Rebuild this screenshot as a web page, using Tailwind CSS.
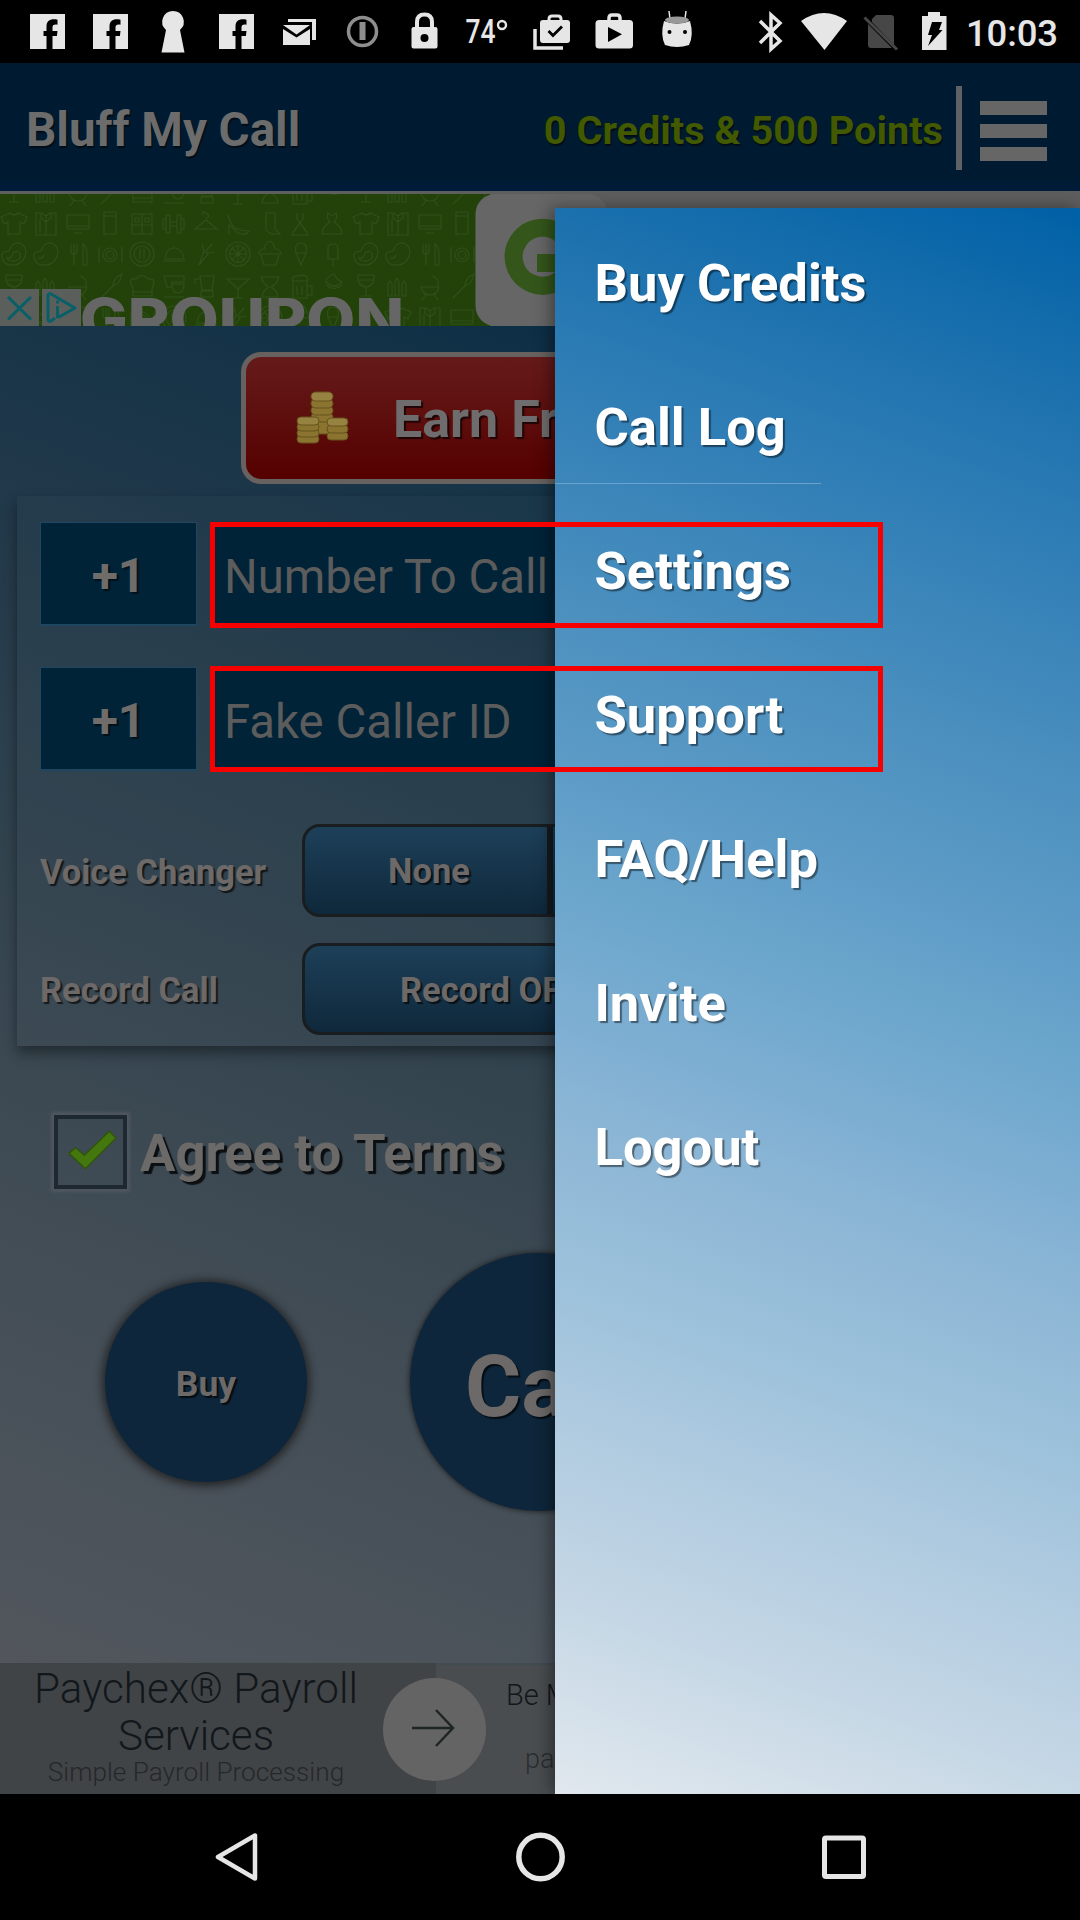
<!DOCTYPE html>
<html lang="en">
<head>
<meta charset="utf-8">
<title>Bluff My Call</title>
<script src="https://cdn.jsdelivr.net/npm/@tailwindcss/browser@4"></script>
</head>
<body class="bg-black">
<svg class="hidden">
  <defs>
    <g id="r1">
      <path d="M-4 -10l-9 4 3 7 4-2v12h12v-12l4 2 3-7-9-4q-4 4-8 0z"/>
      <path d="M22-10h6l4 3 4-3h6v22h-20zM32-7v19M27-10v5l5 4 5-4v-5M26-4v14"/>
      <path d="M53-8h22v14h-22zM60 10h8M53 3h22"/>
      <path d="M90-11h12v22h-12zM90-7h12"/>
      <path d="M118-9h20v20h-20zM128-9v20M118 2h20M121-5h4v4h-4zM131-5h4v4h-4z"/>
      <path d="M149-4h3v10h-3zM152-8h4v18h-4zM156-1h7v4h-7zM163-8h4v18h-4zM167-4h3v10h-3z"/>
      <path d="M192-3q0-2 2-3t-2-4-3 2M192-3l11 9h-22z"/>
      <path d="M214-8q3 12 9 14t12 2q-2 5-11 2l-9-8v9"/>
      <path d="M252-10h9v16l5 5h-9l-5-4z"/>
      <path d="M283-10v6l3 4 3-4v-6M286 0q-5 6-8 12h16q-3-6-8-12z"/>
      <path d="M314-10q-2 6 2 9-8 5-8 12h20q0-7-8-12 4-3 2-9-4 5-8 0z"/>
    </g>
    <g id="r2">
      <path d="M-11 6q-4-9 6-9 3-9 10-8 9 3 6 13t-14 9q-6 0-8-5zM-7 4q5 1 6-5 5-4 7 1t-5 7q-6 1-8-3z"/>
      <path d="M21 6q-4-9 6-9 3-9 10-8 9 3 6 13t-14 9q-6 0-8-5zM24 4q5 1 6-3"/>
      <path d="M57-10v7q0 3 3 3t3-3v-7M60-10v21M69-10q4 2 4 10v11h-4z"/>
      <circle cx="96" cy="1" r="7"/><circle cx="96" cy="1" r="4"/><path d="M85-7v16M108-7v16"/>
      <circle cx="128" cy="0" r="12"/><circle cx="128" cy="0" r="8"/><path d="M126-5v10M130-5v10"/>
      <path d="M149 7h22M151 5q1-11 9-11t10 11zM160-8v2"/>
      <path d="M185 11l5-14 4 3zM190-3l-2-7M192-3l6-7M193-1l7-1"/>
      <circle cx="224" cy="0" r="12"/><circle cx="224" cy="0" r="8.500"/><path d="M224-8v16M216 0h16M218-6l12 12M230-6L218 6"/>
      <path d="M245 0q0-5 5-5 2-7 6-8 4 2 5 8 6 0 6 5zM247 1l3 10h12l3-10"/>
      <path d="M282-1h10l-5 12zM282-1q-2-10 5-10t5 10"/>
      <path d="M314 5v-11q0-4 5-4t5 4v11zM319 5v7"/>
    </g>
    <g id="r3">
      <path d="M-8-11h16q1 11-8 12-9-1-8-12zM0 1v9M-5 10h10M-7-6h14"/>
      <path d="M22 10v-12l2-3 2 3v12zM29 10v-14l2-4 2 4v14zM36 10v-12l2-3 2 3v12z"/>
      <path d="M55 1h18q-2 8-9 8t-9-8zM60 8l-4 6M68 8l4 6M66-10q8 2 6 10"/>
      <path d="M87 12l12-12M99 0q0-8 9-12-2 10-9 12z"/>
      <path d="M119 2q-6-10 3-9 6-7 12 0 9-1 4 9v8h-19zM119 6h19"/>
      <path d="M150-10h20v6h-12v5h-5zM158-2h12q0 9-6 9t-6-9zM150 11h20"/>
      <path d="M186-10h14l-2 14h-10zM187 5h12v6h-12zM186-7h-5v5"/>
      <path d="M213-7h22l-11 10zM224 3v9M219 12h10"/>
      <path d="M247-9h18q-2 7-8 10 6 3 7 10h-16q1-7 7-10-6-3-8-10z"/>
      <path d="M279-5h14v17h-14zM293 0h5v9h-5M278-5q0-6 7-5 8-3 9 5M283 0v9M288 0v9"/>
      <path d="M312-4q0-5 8-8 2 5 8 8-8 8-16 0zM312-1q8 7 16 0"/>
    </g>
  </defs>
</svg>

<div class="relative flex h-[1920px] w-[1080px] flex-col overflow-hidden bg-black font-['Roboto',sans-serif]">

  <!-- Status bar -->
  <div class="h-[63px] shrink-0">
    <svg width="1080" height="63" viewBox="0 0 1080 63" fill="#e6e6e6">
      <g id="fbicon">
        <path d="M30 14h35v35H30z"/>
        <path d="M46.500 49V36h-3v-5h3v-4.500c0-6 4-8 11-6.800v5c-4-.4-5 .4-5 3V31h5l-.6 5h-4.400v13z" fill="#000"/>
      </g>
      <use href="#fbicon" x="63"/>
      <use href="#fbicon" x="189"/>
      <path d="M173 11a10.800 10.800 0 0 1 7 19l4.500 22.500h-23L166 30a10.800 10.800 0 0 1 7-19z"/>
      <path d="M288 22v-3h28v21h-4V22z"/>
      <path d="M283 25h27l-13.500 9.500zM283 29l13.500 8.500L310 29v16h-27z"/>
      <circle cx="362.500" cy="31.500" r="14" fill="none" stroke="#8e8e8e" stroke-width="3.500"/><path d="M359.500 22h6v18h-6z" fill="#8e8e8e"/>
      <path d="M417 28v-6q0-7.500 7.500-7.500T432 22v6" fill="none" stroke="#e6e6e6" stroke-width="4"/>
      <rect x="411.500" y="27" width="26" height="21.500" rx="2"/><circle cx="424.500" cy="38" r="4" fill="#000"/>
      <text x="465.500" y="43" font-size="32.500" font-weight="500" textLength="30" lengthAdjust="spacingAndGlyphs">74</text>
      <circle cx="502" cy="25" r="4" fill="none" stroke="#e6e6e6" stroke-width="2.400"/>
      <path d="M535 29v19h28" fill="none" stroke="#e6e6e6" stroke-width="3.500"/>
      <path d="M549 21v-2q0-3 3-3h6q3 0 3 3v2" fill="none" stroke="#e6e6e6" stroke-width="3"/>
      <rect x="540" y="20" width="30" height="23" rx="3"/><path d="M548.500 31l4.500 4.500 9-9" fill="none" stroke="#000" stroke-width="2.800"/>
      <path d="M609 21v-3q0-3 3-3h5q3 0 3 3v3" fill="none" stroke="#e6e6e6" stroke-width="3.500"/>
      <rect x="595.500" y="20" width="37.500" height="28.500" rx="3.500"/><path d="M608 27l14 7.300L608 42z" fill="#000"/>
      <path d="M670 19l-1-8M685 19l1-8" stroke="#e6e6e6" stroke-width="1.500"/>
      <path d="M664 21q13 5 26 0 4 14-1 24-12 4-24 0-5-10-1-24z"/><ellipse cx="677" cy="20" rx="12" ry="3.500" fill="#999"/><circle cx="669.500" cy="32" r="2" fill="#000"/><circle cx="685" cy="32" r="2" fill="#000"/>
      <path d="M760 21l20 20-9 8V15l9 8-20 20" fill="none" stroke="#e6e6e6" stroke-width="3.500"/>
      <path d="M801 21q23-16 46 0l-22.500 29z"/>
      <path d="M876 15h15q3 0 3 3v27L872 22v-3zM868 24l24 24h-21q-3 0-3-3z" fill="#474747"/><path d="M864.500 17.500l32.500 32" stroke="#474747" stroke-width="3"/>
      <path d="M928 12h12v4h6.500v34H922V16h6z"/><path d="M932 22h10l-3 8h3.500L928 46l4-11h-4z" fill="#000"/>
      <text x="966" y="45.500" font-size="36.500" font-weight="500" textLength="92">10:03</text>
    </svg>
  </div>

  <!-- App header -->
  <header class="flex h-[128px] shrink-0 items-center bg-gradient-to-b from-[#001b31] from-90% to-[#001b3b] pr-[33px] pl-[26px] font-bold">
    <h1 class="mt-[8px] text-[47.500px] leading-none whitespace-nowrap text-[#6c6c6c] [text-shadow:1px_2px_1px_#0008]">Bluff My Call</h1>
    <span class="mt-[7px] ml-auto text-[39.700px] leading-none whitespace-nowrap text-[#435900] [text-shadow:1px_2px_1px_#0008]">0 Credits &amp; 500 Points</span>
    <span class="mt-[2px] ml-[13px] h-[84px] w-[6px] bg-[#5e6266]"></span>
    <span class="mt-[7px] ml-[18px] flex flex-col gap-[9px]">
      <i class="block h-[14px] w-[67px] bg-[#666]"></i>
      <i class="block h-[14px] w-[67px] bg-[#666]"></i>
      <i class="block h-[14px] w-[67px] bg-[#666]"></i>
    </span>
  </header>

  <!-- Top banner -->
  <div class="h-[135px] shrink-0 bg-[#5e5e5e]">
    <svg width="1080" height="135" viewBox="0 191 1080 135">
      <svg x="0" y="194" width="490" height="132" viewBox="0 194 490 132" overflow="hidden">
        <path fill="#22420a" d="M0 194h490v132H0z"/>
        <g fill="none" stroke="#30501b" stroke-width="1.200">
          <use href="#r3" x="14" y="192"/><use href="#r3" x="366" y="192"/>
          <use href="#r1" x="14" y="223"/><use href="#r1" x="366" y="223"/>
          <use href="#r2" x="14" y="254"/><use href="#r2" x="366" y="254"/>
          <use href="#r3" x="14" y="286"/><use href="#r3" x="366" y="286"/>
          <use href="#r2" x="46" y="318"/><use href="#r1" x="398" y="318"/>
        </g>
      </svg>
      <text x="80" y="339.500" font-family="Inter" font-weight="800" font-size="58" fill="#666" textLength="324" lengthAdjust="spacingAndGlyphs">GROUPON</text>
      <rect x="475.500" y="194" width="132" height="132" rx="20" fill="#666"/>
      <path d="M563 236A29 29 0 1 0 571 263H537" fill="none" stroke="#34561a" stroke-width="18"/>
      <path fill="#5b5f5b" d="M0 289h39v37H0zM42 289h39v37H42z"/>
      <g fill="none" stroke="#075f68" stroke-width="3"><path d="M8 297l23 22.500M31 297L8 319.500"/><path d="M55 318l-4 3q-3 1-3-2v-23q0-3 3-2l24 14-17 9.500" stroke-linejoin="round"/><path d="M57.500 306v12M57.500 300.500v3"/></g>
    </svg>
  </div>

  <!-- Screen body -->
  <main class="relative flex h-[1468px] shrink-0 flex-col bg-[linear-gradient(201deg,#002743_0%,#133247_16%,#22394a_32%,#33444f_52%,#414c55_68%,#4d545c_86%,#57585b_100%)]">
    <div class="mt-[26px] ml-[241px] flex h-[132px] w-[598px] shrink-0 items-center rounded-[20px] border-[5px] border-[#67625f] bg-gradient-to-b from-[#651a1a] to-[#550000] pl-[50px]">
      <svg class="-mt-px" width="53" height="54" viewBox="0 0 53 54" fill="#8a7430" stroke="#66521c" stroke-width="1">
        <rect x="15" y="30" width="22" height="13" rx="5"/><rect x="15" y="22" width="22" height="9" rx="4.500"/><rect x="15" y="15" width="22" height="9" rx="4.500"/><rect x="15" y="8" width="22" height="9" rx="4.500"/><rect x="15" y="1" width="22" height="9" rx="4.500" fill="#978341"/>
        <rect x="1" y="44" width="22" height="8" rx="4"/><rect x="1" y="38" width="22" height="8" rx="4"/><rect x="1" y="32" width="22" height="8" rx="4"/><rect x="1" y="26" width="22" height="8" rx="4" fill="#978341"/>
        <rect x="31" y="41" width="21" height="8" rx="4"/><rect x="31" y="34" width="21" height="8" rx="4"/><rect x="31" y="27" width="21" height="8" rx="4" fill="#978341"/>
      </svg>
      <span class="mt-[4px] ml-[44px] text-[52px] leading-none font-bold whitespace-nowrap text-[#6e6c6c] [text-shadow:2px_2px_1px_#000a]">Earn Fr</span>
    </div>

    <section class="mt-[12px] ml-[17px] flex h-[550px] w-[1046px] shrink-0 flex-col bg-white/[0.015] pt-[26px] pl-[23px] shadow-[0_7px_12px_#00000066]">
      <div class="flex gap-[13px]">
        <div class="flex h-[104px] w-[157px] items-center justify-center border border-b-2 border-[#1f4660] bg-[#012338] pt-[5px] text-[48px] font-bold text-[#6f6c6a] [text-shadow:2px_2px_1px_#0008]">+1</div>
        <div class="flex h-[104px] w-[673px] items-center bg-[#012338] pt-[6px] pl-[14px] text-[47.300px] whitespace-nowrap text-[#5c5c5c]">Number To Call</div>
      </div>
      <div class="mt-[41px] flex gap-[13px]">
        <div class="flex h-[104px] w-[157px] items-center justify-center border border-b-2 border-[#1f4660] bg-[#012338] pt-[5px] text-[48px] font-bold text-[#6f6c6a] [text-shadow:2px_2px_1px_#0008]">+1</div>
        <div class="flex h-[104px] w-[673px] items-center bg-[#012338] pt-[6px] pl-[14px] text-[47.300px] whitespace-nowrap text-[#5c5c5c]">Fake Caller ID</div>
      </div>
      <div class="mt-[53px] flex items-center font-bold text-[#6c6968] [text-shadow:2px_2px_1px_#000a]">
        <span class="w-[262px] pt-[3px] text-[34.500px] leading-none whitespace-nowrap">Voice Changer</span>
        <div class="flex h-[93px] w-[600px] overflow-hidden rounded-[18px] border-[3px] border-[#1a1d20] bg-gradient-to-b from-[#1d4059] to-[#0f283b]">
          <span class="flex w-[248px] items-center justify-center border-r-[6px] border-[#141a20] pt-[3px] pl-[6px] text-[34.500px]">None</span>
        </div>
      </div>
      <div class="mt-[26px] flex items-center font-bold text-[#6c6968] [text-shadow:2px_2px_1px_#000a]">
        <span class="w-[262px] pt-[3px] text-[34.500px] leading-none whitespace-nowrap">Record Call</span>
        <div class="flex h-[92px] w-[600px] items-center rounded-[18px] border-[3px] border-[#1a1d20] bg-gradient-to-b from-[#1d4059] to-[#0f283b] pt-[4px] pl-[95px] text-[34.500px]">Record OFF</div>
      </div>
    </section>

    <div class="mt-[69px] ml-[54px] flex items-center">
      <span class="flex h-[74px] w-[73px] items-center justify-center border-[4px] border-[#1e2830] shadow-[0_0_3px_3px_#50575f]">
        <svg class="mt-[-4px] ml-[4px]" width="50" height="43" viewBox="0 0 52 44"><path d="M1 25l7-6 9 8L43 2l7 7-32 32z" fill="#44780e" stroke="#30540d" stroke-width="1.500"/></svg>
      </span>
      <span class="mt-[2px] ml-[13px] text-[52.700px] leading-none font-bold whitespace-nowrap text-[#6c6a69] [text-shadow:3px_3px_1px_#000c]">Agree to Terms</span>
    </div>

    <div class="mt-[64px] flex items-center pl-[105px]">
      <div class="flex h-[200px] w-[202px] items-center justify-center rounded-full bg-[#0e263b] pt-[5px] text-[35.500px] font-bold text-[#6c6968] shadow-[0_1px_9px_3px_#1c1c1ccc] [text-shadow:2px_2px_1px_#000a]">Buy</div>
      <div class="ml-[103px] flex h-[258px] w-[258px] items-center justify-center rounded-full bg-[#0e263b] pt-[8px] text-[86px] font-bold text-[#6c6968] shadow-[0_0_5px_1px_#1c1c1ccc] [text-shadow:2px_2px_1px_#000a]">Call</div>
    </div>

    <!-- Bottom banner -->
    <div class="mt-auto flex h-[131px] shrink-0 bg-[#414446] font-light">
      <div class="flex w-[383px] flex-col pl-[9px] text-center text-[#12171b]">
        <span class="mt-[2px] text-[42.200px] leading-[47px]">Paychex® Payroll<br>Services</span>
        <span class="text-[26.200px] leading-[26px] whitespace-nowrap text-[#24282b]">Simple Payroll Processing</span>
      </div>
      <div class="flex w-[53px] items-center">
        <div class="relative z-10 mt-[2px] flex size-[103px] shrink-0 items-center justify-center rounded-full bg-[#656464]">
          <svg class="mt-[-3px] mr-[4px]" width="44" height="38" viewBox="0 0 44 38" fill="none" stroke="#1d2622" stroke-width="2.500"><path d="M1 19h41M25 1l17 18-17 18"/></svg>
        </div>
      </div>
      <div class="grow border-t-2 border-[#414b52] bg-[#494d50] pl-[70px] text-[#12171b]">
        <div class="pt-[11px] text-[29px] leading-[39px] whitespace-nowrap">Be More</div>
        <div class="mt-[25px] pl-[19px] text-[27px] leading-[39px] whitespace-nowrap text-[#2a2e31]">paychex</div>
      </div>
    </div>
  </main>

  <!-- Android navigation -->
  <nav class="flex h-[126px] shrink-0 items-center justify-between pr-[212px] pl-[214px]">
    <svg width="46" height="52" viewBox="0 0 46 52" fill="none" stroke="#e6e6e6" stroke-width="4.500" stroke-linejoin="round"><path d="M4 26L41 4.500v43z"/></svg>
    <svg width="52" height="52" viewBox="0 0 52 52" fill="none" stroke="#e6e6e6" stroke-width="5.500"><circle cx="25.500" cy="26" r="21.700"/></svg>
    <svg width="46" height="52" viewBox="0 0 46 52" fill="none" stroke="#e6e6e6" stroke-width="5"><rect x="2.500" y="7" width="39" height="38.500" rx="1.500"/></svg>
  </nav>

  <!-- Slide-in menu -->
  <aside class="absolute top-[208px] left-[555px] z-20 h-[1586px] w-[525px] bg-[linear-gradient(199deg,#0060a6_0%,#1a70ad_10%,#2a7ab4_17%,#3f88bb_27%,#4a8fbe_32%,#609dc8_43%,#6aa5cb_48%,#80b0d3_57%,#8bb5d5_61%,#9dc2db_71%,#b0cbe0_79%,#c5d7e5_89%,#e1e8ee_100%)] pt-[3px] shadow-[-4px_0_16px_#00000066]">
    <ul class="text-[52.500px] leading-none font-bold text-white [text-shadow:2px_2px_1px_#0007]">
      <li class="flex h-[144px] items-center pl-[39.500px]">Buy Credits</li>
      <li class="flex h-[144px] items-center pl-[39.500px]">Call Log</li>
      <li class="flex h-[144px] items-center pl-[39.500px]">Settings</li>
      <li class="flex h-[144px] items-center pl-[39.500px]">Support</li>
      <li class="flex h-[144px] items-center pl-[39.500px]">FAQ/Help</li>
      <li class="flex h-[144px] items-center pl-[39.500px]">Invite</li>
      <li class="flex h-[144px] items-center pl-[39.500px]">Logout</li>
    </ul>
    <div class="absolute top-[275px] left-0 h-px w-[266px] bg-[#6ba3cc]"></div>
  </aside>

  <!-- Field highlights -->
  <div class="absolute top-[522px] left-[210px] z-30 h-[106px] w-[673px] border-[5px] border-[#f60000]"></div>
  <div class="absolute top-[666px] left-[210px] z-30 h-[106px] w-[673px] border-[5px] border-[#f60000]"></div>
</div>
</body>
</html>
